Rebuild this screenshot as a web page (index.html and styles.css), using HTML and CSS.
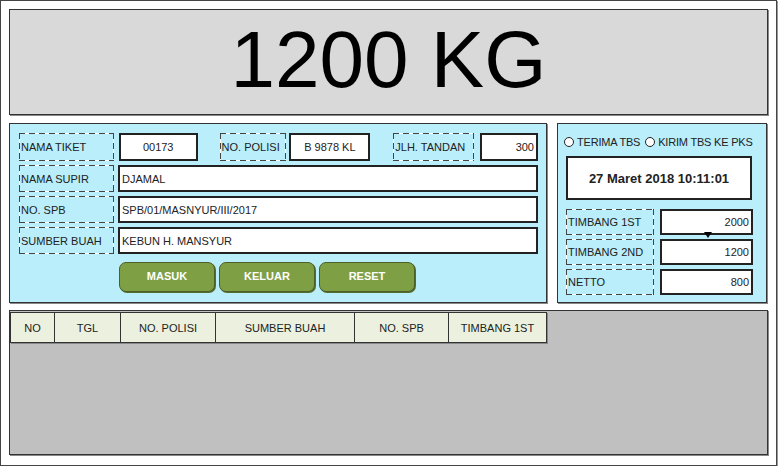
FILE: index.html
```html
<!DOCTYPE html>
<html lang="en">
<head>
  <meta charset="UTF-8">
  <title>Timbangan TBS</title>
  <link rel="stylesheet" href="styles.css">
</head>
<body>
  <div class="frame">
    <div class="display">1200 KG</div>

    <div class="middle">
      <div class="panel form-panel">
        <div class="top-row">
          <div class="label w-tiket">NAMA TIKET</div>
          <div class="value center w-no">00173</div>
          <div class="label w-polisi">NO. POLISI</div>
          <div class="value center w-plat">B 9878 KL</div>
          <div class="label w-tandan">JLH. TANDAN</div>
          <div class="value right w-jlh">300</div>
        </div>
        <div class="field-row">
          <div class="label">NAMA SUPIR</div>
          <div class="value">DJAMAL</div>
        </div>
        <div class="field-row">
          <div class="label">NO. SPB</div>
          <div class="value">SPB/01/MASNYUR/III/2017</div>
        </div>
        <div class="field-row">
          <div class="label">SUMBER BUAH</div>
          <div class="value">KEBUN H. MANSYUR</div>
        </div>
        <div class="buttons">
          <button>MASUK</button>
          <button>KELUAR</button>
          <button>RESET</button>
        </div>
      </div>

      <div class="panel weigh-panel">
        <div class="radios">
          <span class="radio"><i></i>TERIMA TBS</span>
          <span class="radio"><i></i>KIRIM TBS KE PKS</span>
        </div>
        <div class="clock">27 Maret 2018 10:11:01</div>
        <div class="weigh-row">
          <div class="label">TIMBANG 1ST</div>
          <div class="value right marked">2000</div>
        </div>
        <div class="weigh-row">
          <div class="label">TIMBANG 2ND</div>
          <div class="value right">1200</div>
        </div>
        <div class="weigh-row">
          <div class="label">NETTO</div>
          <div class="value right">800</div>
        </div>
      </div>
    </div>

    <div class="table-box">
      <div class="thead">
        <div class="th c-no">NO</div>
        <div class="th c-tgl">TGL</div>
        <div class="th c-polisi">NO. POLISI</div>
        <div class="th c-sumber">SUMBER BUAH</div>
        <div class="th c-spb">NO. SPB</div>
        <div class="th c-timbang">TIMBANG 1ST</div>
      </div>
    </div>
  </div>
</body>
</html>
```

FILE: styles.css
```css
* {
  box-sizing: border-box;
}

body {
  margin: 0;
  font-family: "Liberation Sans", Arial, sans-serif;
  font-size: 11px;
  color: #222;
  background: #fff;
}

.frame {
  width: 777px;
  height: 466px;
  border: 1px solid #444;
  box-shadow: 1px 1px 0 #999;
  padding: 8px 8px 0 8px;
}

.display {
  height: 106px;
  background: #d9d9d9;
  border: 1px solid #333;
  box-shadow: 1px 1px 0 #888;
  text-align: center;
  font-size: 80px;
  line-height: 100px;
  color: #000;
}

.middle {
  display: flex;
  gap: 10px;
  margin-top: 8px;
  height: 180px;
}

.panel {
  background: #b9eefa;
  border: 1px solid #333;
  box-shadow: 1px 1px 0 #888;
}

.form-panel {
  width: 538px;
  padding: 9px 8px 0 9px;
}

.weigh-panel {
  width: 210px;
  padding: 11px 10px 0 6px;
}

/* dashed label box: dark dashes over a white line */
.label {
  padding: 0 0 0 2px;
  display: flex;
  align-items: center;
  white-space: nowrap;
  background:
    repeating-linear-gradient(90deg, #444 0 6px, transparent 6px 10px) left top / 100% 1px no-repeat,
    repeating-linear-gradient(90deg, #444 0 6px, transparent 6px 10px) left bottom / 100% 1px no-repeat,
    repeating-linear-gradient(180deg, #444 0 6px, transparent 6px 10px) left top / 1px 100% no-repeat,
    repeating-linear-gradient(180deg, #444 0 6px, transparent 6px 10px) right top / 1px 100% no-repeat,
    linear-gradient(#fff, #fff) left top / 100% 1px no-repeat,
    linear-gradient(#fff, #fff) left bottom / 100% 1px no-repeat,
    linear-gradient(#fff, #fff) left top / 1px 100% no-repeat,
    linear-gradient(#fff, #fff) right top / 1px 100% no-repeat;
}

.value {
  background: #fff;
  border: 2px solid #222;
  padding: 0 2px;
  display: flex;
  align-items: center;
  white-space: nowrap;
}

.value.center {
  justify-content: center;
}

.value.right {
  justify-content: flex-end;
}

.top-row {
  display: flex;
  height: 28px;
}

.w-tiket { width: 95px; }
.w-no { width: 79px; margin-left: 5px; }
.w-polisi { width: 67px; margin-left: 22px; }
.w-plat { width: 81px; margin-left: 3px; }
.w-tandan { width: 81px; margin-left: 23px; }
.w-jlh { width: 58px; margin-left: 6px; }

.field-row {
  display: grid;
  grid-template-columns: 95px 1fr;
  gap: 4px;
  height: 27px;
  margin-top: 4px;
}

.buttons {
  display: flex;
  gap: 4px;
  margin: 8px 0 0 100px;
}

button {
  width: 96px;
  height: 30px;
  padding: 0 0 3px;
  background: #7f9f45;
  border: 1px solid #4b5f27;
  border-radius: 7px;
  box-shadow: 1px 1px 0 #556b2f;
  color: #fff;
  font-family: "Liberation Sans", Arial, sans-serif;
  font-size: 11px;
  font-weight: bold;
}

.radios {
  display: flex;
  gap: 5px;
  height: 14px;
  align-items: center;
  white-space: nowrap;
  letter-spacing: -0.2px;
}

.radio {
  display: flex;
  align-items: center;
  gap: 3px;
}

.radio i {
  width: 10px;
  height: 10px;
  border: 1px solid #222;
  border-radius: 50%;
  background: #fff;
}

.clock {
  height: 44px;
  margin: 7px 4px 0 2px;
  background: #fff;
  border: 2px solid #222;
  display: flex;
  align-items: center;
  justify-content: center;
  font-size: 13px;
  font-weight: bold;
}

.weigh-row {
  display: grid;
  grid-template-columns: 88px 93px;
  gap: 6px;
  height: 26px;
  margin: 4px 4px 0 2px;
}

.clock + .weigh-row {
  margin-top: 9px;
}

.marked {
  position: relative;
}

.marked::after {
  content: "";
  position: absolute;
  left: 42px;
  bottom: -5px;
  border-left: 4px solid transparent;
  border-right: 4px solid transparent;
  border-top: 6px solid #000;
}

.table-box {
  height: 145px;
  margin-top: 7px;
  background: #c0c0c0;
  border: 1px solid #333;
  box-shadow: 1px 1px 0 #888;
  padding-top: 1px;
}

.thead {
  display: flex;
  height: 31px;
  width: 537px;
  background: #ebf1de;
  border: 1px solid #333;
  box-shadow: 1px 1px 0 #888;
}

.th {
  display: flex;
  align-items: center;
  justify-content: center;
  border-left: 1px solid #333;
}

.th:first-child {
  border-left: none;
}

.c-no { width: 43px; }
.c-tgl { width: 66px; }
.c-polisi { width: 95px; }
.c-sumber { width: 139px; }
.c-spb { width: 94px; }
.c-timbang { flex: 1; }
```
